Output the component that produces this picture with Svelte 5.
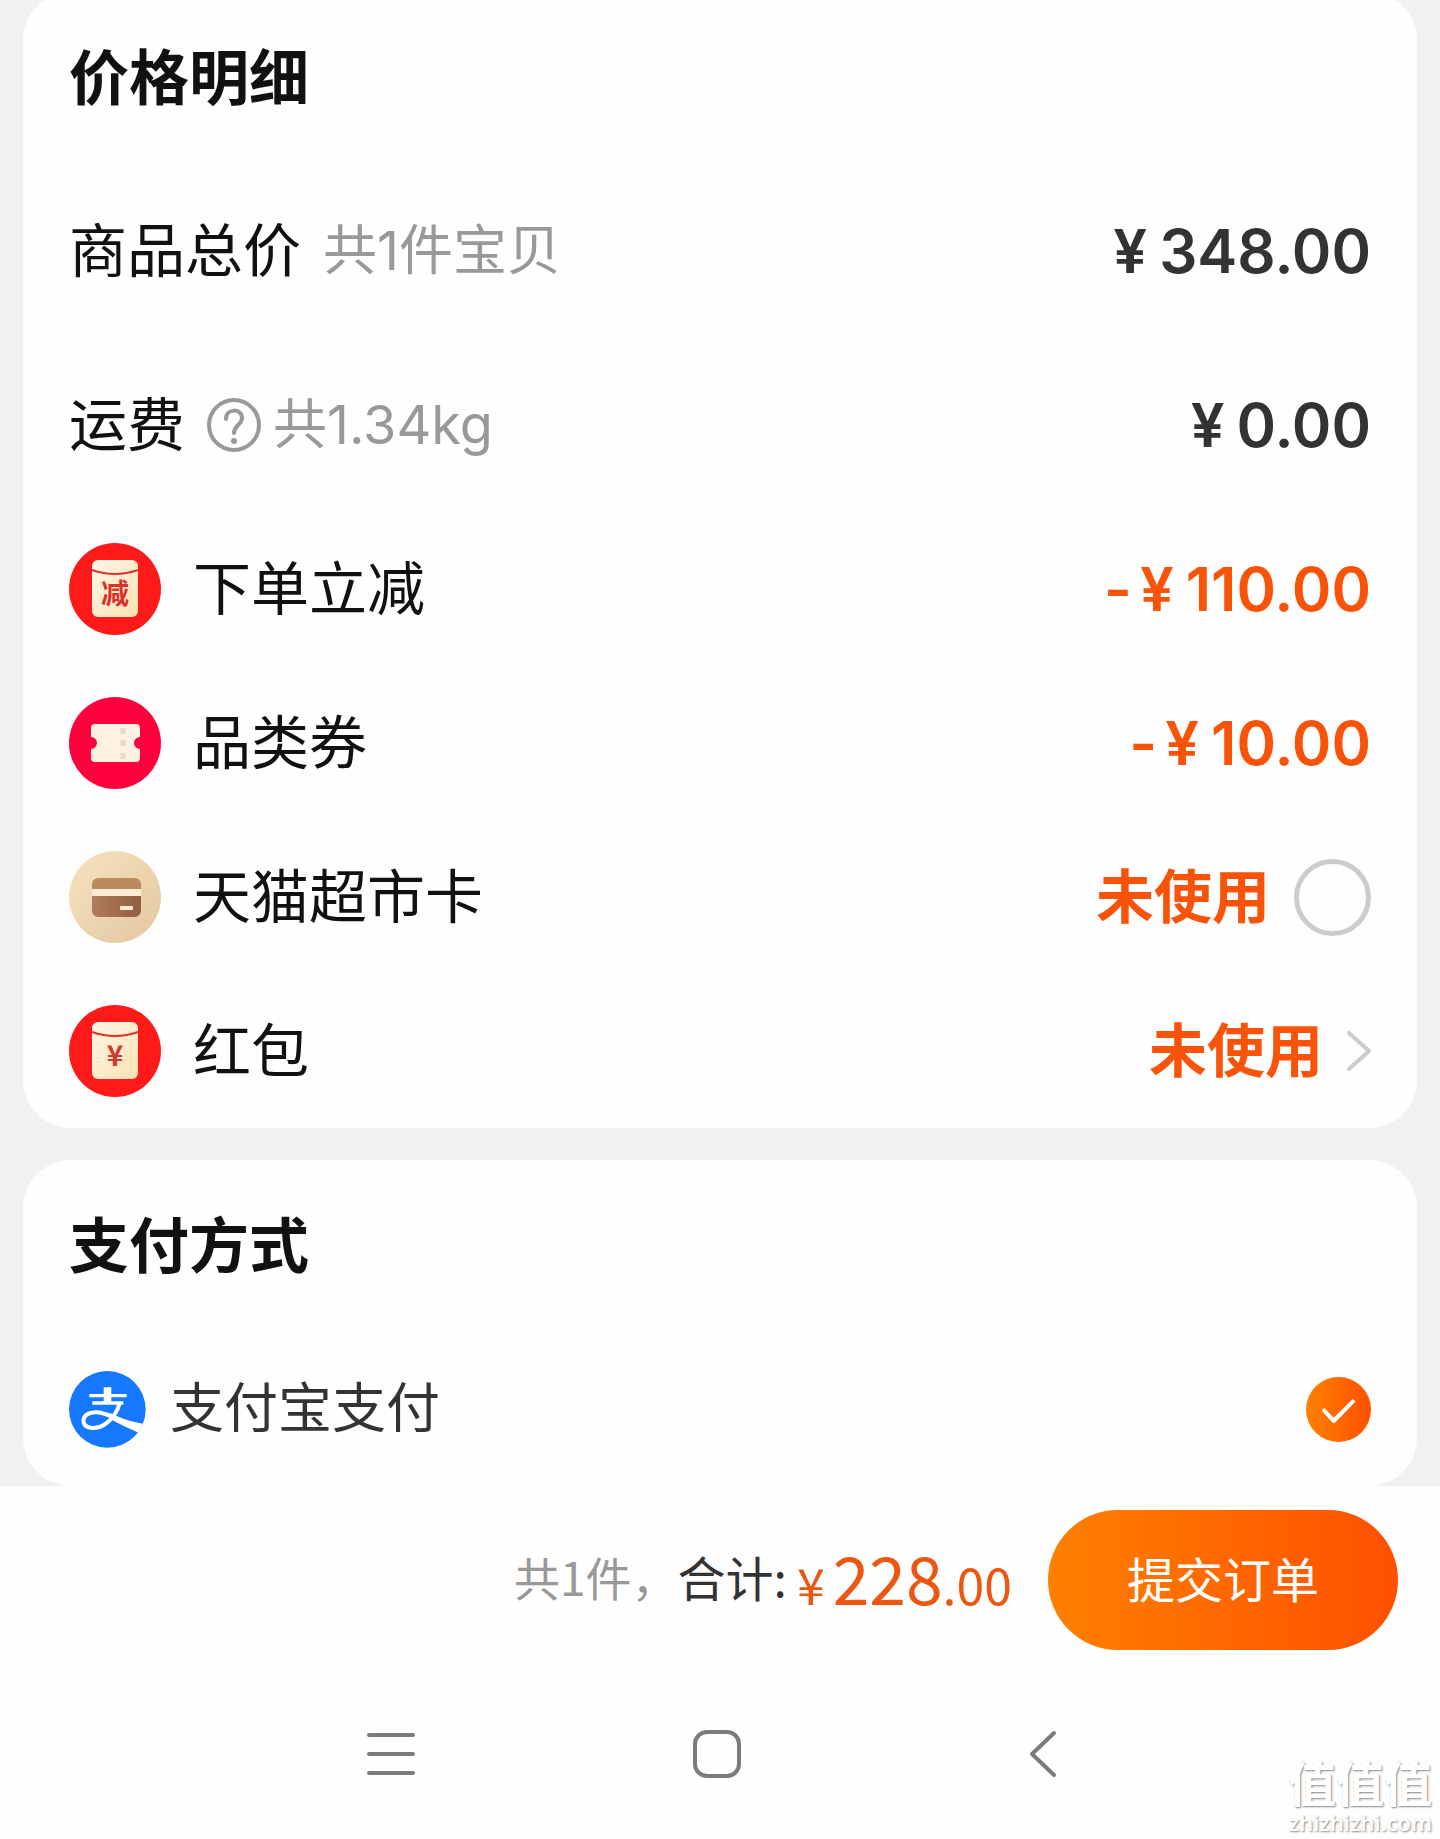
<script lang="ts">
  type Discount = {
    id: string;
    icon: "cut" | "ticket" | "card" | "packet";
    label: string;
    amount?: string;
    status?: string;
  };

  const discounts: Discount[] = [
    { id: "instant", icon: "cut", label: "下单立减", amount: "110.00" },
    { id: "coupon", icon: "ticket", label: "品类券", amount: "10.00" },
    { id: "market-card", icon: "card", label: "天猫超市卡", status: "未使用" },
    { id: "red-packet", icon: "packet", label: "红包", status: "未使用" },
  ];

  let useCard = $state(false);
  let payment = $state("alipay");
</script>

{#snippet discountIcon(icon: Discount["icon"])}
  <svg class="discount-icon" viewBox="0 0 92 92" aria-hidden="true">
    {#if icon === "cut" || icon === "packet"}
      <circle cx="46" cy="46" r="46" fill="#fd1a19" />
      <rect x="23" y="17" width="46" height="57" rx="6" fill="url(#packet-fill)" />
      <path d="M23 27Q46 35 69 27" fill="none" stroke="#d8332b" stroke-width="2" />
      {#if icon === "cut"}
        <text x="46" y="61" font-size="28" font-weight="700" text-anchor="middle" fill="#d8302a">减</text>
      {:else}
        <text x="46" y="61" font-size="28" font-weight="700" text-anchor="middle" fill="#cf3a30">¥</text>
      {/if}
    {:else if icon === "ticket"}
      <circle cx="46" cy="46" r="46" fill="#fe003b" />
      <path
        d="M26 27H67Q71 27 71 31V40A6 6 0 0 0 71 52V61Q71 65 67 65H26Q22 65 22 61V52A6 6 0 0 0 22 40V31Q22 27 26 27Z"
        fill="#fdf1e4"
      />
      <path d="M54 31V37M54 43V49M54 56V62" stroke="#eed6c4" stroke-width="5" />
    {:else}
      <circle cx="46" cy="46" r="46" fill="url(#card-fill)" />
      <path d="M23 38V34Q23 27 30 27H65Q72 27 72 34V38Z" fill="#b98b5e" />
      <rect x="23" y="38" width="49" height="7" fill="#fcecd2" />
      <path d="M23 45H72V59Q72 66 65 66H30Q23 66 23 59Z" fill="url(#card-body)" />
      <rect x="51" y="55" width="13" height="4" rx="1" fill="#fbe9d4" />
    {/if}
  </svg>
{/snippet}

<svg class="defs" width="0" height="0" aria-hidden="true">
  <defs>
    <linearGradient id="packet-fill" x1="0" y1="0" x2="1" y2="1">
      <stop offset="0" stop-color="#fff6e6" />
      <stop offset="1" stop-color="#fce2b2" />
    </linearGradient>
    <linearGradient id="card-fill" x1="0" y1="0" x2="1" y2="1">
      <stop offset="0" stop-color="#f8e2bf" />
      <stop offset="1" stop-color="#e3c7a0" />
    </linearGradient>
    <linearGradient id="card-body" x1="0" y1="0" x2="1" y2="0">
      <stop offset="0" stop-color="#b07c5a" />
      <stop offset="1" stop-color="#925f41" />
    </linearGradient>
  </defs>
</svg>

<div class="checkout">
  <main class="cards">
    <section class="card price-card">
      <h2 class="card-title">价格明细</h2>

      <div class="row tall">
        <span class="label">商品总价</span>
        <span class="note total-note">共1件宝贝</span>
        <span class="price"><span class="yen">¥</span>348.00</span>
      </div>

      <div class="row tall">
        <span class="label">运费</span>
        <button class="help" type="button" aria-label="运费说明">
          <svg viewBox="0 0 54 54">
            <circle cx="27" cy="27" r="25" />
            <path d="M19 21C19 10 35 10 35 20C35 27 27 27 27 35" />
            <circle class="dot" cx="27" cy="43" r="3" />
          </svg>
        </button>
        <span class="note">共1.34kg</span>
        <span class="price"><span class="yen">¥</span>0.00</span>
      </div>

      {#each discounts as item (item.id)}
        {#if item.icon === "card"}
          <label class="row">
            {@render discountIcon(item.icon)}
            <span class="label">{item.label}</span>
            <span class="status">{item.status}</span>
            <input class="ring" type="checkbox" bind:checked={useCard} />
          </label>
        {:else if item.icon === "packet"}
          <button class="row" type="button">
            {@render discountIcon(item.icon)}
            <span class="label">{item.label}</span>
            <span class="status">{item.status}</span>
            <svg class="chevron" viewBox="0 0 24 40" aria-hidden="true">
              <path d="M2 2L22 20L2 38" />
            </svg>
          </button>
        {:else}
          <div class="row">
            {@render discountIcon(item.icon)}
            <span class="label">{item.label}</span>
            <span class="price minus">
              <span class="sign">-</span><span class="yen">¥</span>{item.amount}
            </span>
          </div>
        {/if}
      {/each}
    </section>

    <section class="card">
      <h2 class="card-title">支付方式</h2>

      <label class="row">
        <svg class="alipay" viewBox="0 0 231 231" aria-hidden="true">
          <defs>
            <clipPath id="alipay-clip"><circle cx="115" cy="115" r="115" /></clipPath>
          </defs>
          <g clip-path="url(#alipay-clip)">
            <rect width="231" height="231" fill="#1677ff" />
            <path d="M104 49H127V98H104ZM61 69H173V79H61ZM70 91H163V101H70Z" fill="#fff" />
            <path
              d="M152 96C146 122 128 148 106 161C86 175 50 176 44 155C39 134 60 123 84 124C104 125 122 134 142 144"
              fill="none"
              stroke="#fff"
              stroke-width="12"
            />
            <path d="M108 124Q126 126 145 136Q180 152 231 160L212 187Q170 168 133 149Z" fill="#fff" />
          </g>
        </svg>
        <span class="pay-name">支付宝支付</span>
        <input class="check" type="radio" name="payment" value="alipay" bind:group={payment} />
      </label>
    </section>
  </main>

  <footer class="submit-bar">
    <span class="count">共1件，</span>
    <span class="sum">合计:</span>
    <span class="total"><span class="total-yen">¥</span>228<span class="cents">.00</span></span>
    <button class="submit" type="button">提交订单</button>
  </footer>

  <nav class="system-nav">
    <button type="button" aria-label="菜单">
      <svg viewBox="0 0 48 48"><path d="M2 5H46M2 24H46M2 43H46" /></svg>
    </button>
    <button type="button" aria-label="主页">
      <svg viewBox="0 0 48 48"><rect x="2" y="2" width="44" height="44" rx="12" /></svg>
    </button>
    <button type="button" aria-label="返回">
      <svg viewBox="0 0 48 48"><path d="M35 3L13 24L35 45" /></svg>
    </button>
  </nav>

  <div class="watermark">
    <span class="mark-name">值值值</span>
    <span class="mark-url">zhizhizhi.com</span>
  </div>
</div>

<style>
  :global(body) {
    background: #fefefe;
  }

  .defs {
    position: absolute;
  }

  .checkout {
    position: relative;
    overflow: hidden;
    font-family: "Noto Sans CJK SC", sans-serif;
    color: #111;
  }

  button {
    padding: 0;
    border: none;
    background: none;
    color: inherit;
    font: inherit;
    text-align: left;
    cursor: pointer;
  }

  .cards {
    display: flex;
    flex-direction: column;
    gap: 32px;
    padding: 0 23px;
    background: #f1f1f1;
  }

  .card {
    padding: 0 46px;
    border-radius: 48px;
    background: #fefefe;
  }

  /* the first card is scrolled slightly past the top edge */
  .price-card {
    margin-top: -8px;
  }

  .card-title {
    display: flex;
    align-items: center;
    box-sizing: border-box;
    height: 172px;
    margin: 0;
    padding-bottom: 8px;
    font-size: 60px;
    font-weight: 700;
    line-height: 1;
  }

  .row {
    display: flex;
    align-items: center;
    width: 100%;
    height: 154px;
    line-height: 1;
  }

  .row.tall {
    height: 174px;
  }

  .label,
  .status,
  .pay-name {
    padding-bottom: 8px;
  }

  .label {
    font-size: 58px;
  }

  .discount-icon {
    width: 92px;
    height: 92px;
    margin-right: 32px;
  }

  .note {
    color: #999;
    font-family: Inter, "Noto Sans CJK SC", sans-serif;
    font-size: 54px;
  }

  .total-note {
    margin-left: 22px;
  }

  .help {
    width: 54px;
    height: 54px;
    margin: 0 12px 0 22px;
  }

  .help svg {
    display: block;
    fill: none;
    stroke: #999;
    stroke-width: 4;
    stroke-linecap: round;
  }

  .help .dot {
    fill: #999;
    stroke: none;
  }

  .price,
  .status {
    margin-left: auto;
  }

  .price {
    color: #333;
    font-family: Inter, sans-serif;
    font-size: 60px;
    font-weight: 600;
  }

  .yen {
    margin-right: 12px;
  }

  .minus,
  .status {
    color: #f9530a;
  }

  .sign {
    margin-right: 8px;
  }

  .status {
    font-size: 58px;
    font-weight: 700;
  }

  .ring {
    appearance: none;
    width: 77px;
    height: 77px;
    margin: 0 0 0 24px;
    border: 5px solid #ccc;
    border-radius: 50%;
  }

  .ring:checked {
    border-color: #ff5000;
    background: #ff5000;
  }

  .chevron {
    width: 24px;
    height: 40px;
    margin-left: 24px;
    fill: none;
    stroke: #ccc;
    stroke-width: 4;
    stroke-linecap: round;
  }

  .alipay {
    width: 77px;
    height: 77px;
    margin-right: 24px;
  }

  .pay-name {
    color: #333;
    font-size: 54px;
  }

  .check {
    appearance: none;
    display: grid;
    place-items: center;
    width: 65px;
    height: 65px;
    margin: 0 0 0 auto;
    border-radius: 50%;
    background: linear-gradient(90deg, #ff8000, #ff5000);
  }

  .check::before {
    content: "";
    width: 34px;
    height: 24px;
    margin-top: 4px;
    background: #fff;
    clip-path: polygon(0 48%, 8% 38%, 36% 78%, 92% 0, 100% 10%, 39% 100%, 33% 100%);
  }

  .submit-bar {
    display: flex;
    align-items: center;
    justify-content: flex-end;
    height: 188px;
    padding-right: 42px;
    line-height: 1;
  }

  .count,
  .sum,
  .total {
    padding-bottom: 8px;
  }

  .count {
    color: #999;
    font-size: 46px;
  }

  .sum {
    color: #333;
    font-size: 48px;
  }

  .total {
    margin: 0 36px 0 10px;
    color: #ed5610;
    font-size: 66px;
  }

  .total-yen,
  .cents {
    font-size: 50px;
  }

  .total-yen {
    margin-right: 8px;
  }

  .submit {
    width: 350px;
    height: 140px;
    padding-bottom: 6px;
    border-radius: 70px;
    background: linear-gradient(90deg, #ff8000, #ff5000);
    color: #fff;
    font-size: 48px;
    text-align: center;
  }

  .system-nav {
    display: grid;
    grid-template-columns: repeat(3, 1fr);
    box-sizing: border-box;
    height: 165px;
    padding: 0 234px 6px 228px;
  }

  .system-nav button {
    display: grid;
    place-items: center;
  }

  .system-nav svg {
    width: 48px;
    height: 48px;
    fill: none;
    stroke: #7b7b7b;
    stroke-width: 4;
    stroke-linecap: round;
    stroke-linejoin: round;
  }

  .watermark {
    position: absolute;
    right: 8px;
    bottom: 6px;
    display: flex;
    flex-direction: column;
    align-items: flex-end;
    gap: 6px;
    color: #fff;
    line-height: 1;
    text-shadow: 1px 1px 2px #888;
    pointer-events: none;
  }

  .mark-name {
    font-size: 48px;
    font-weight: 700;
  }

  .mark-url {
    font-family: "Open Sans", sans-serif;
    font-size: 22px;
    font-weight: 600;
  }
</style>
